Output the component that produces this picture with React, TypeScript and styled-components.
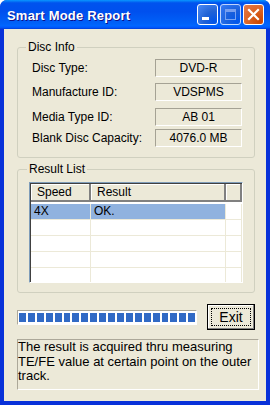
import styled, { createGlobalStyle } from "styled-components";

const GlobalStyle = createGlobalStyle`
  html, body {
    margin: 0;
    padding: 0;
    background: #ffffff;
  }
  body {
    font-family: "Liberation Sans", Arial, sans-serif;
  }
`;

const Window = styled.div`
  width: 270px;
  height: 405px;
  display: flex;
  flex-direction: column;
  background: #0831d9;
  border-radius: 7px 7px 0 0;
  overflow: hidden;
  box-sizing: border-box;
`;

const TitleBar = styled.div`
  height: 29px;
  flex: none;
  display: flex;
  align-items: center;
  padding: 0 6px 0 7px;
  background: linear-gradient(
    180deg,
    #0997ff 0%,
    #0053ee 10%,
    #0050ee 40%,
    #0061f8 80%,
    #0066ff 88%,
    #005bff 94%,
    #003dd7 100%
  );
`;

const Title = styled.div`
  flex: 1 1;
  color: #ffffff;
  font-weight: bold;
  font-size: 13px;
  letter-spacing: 0.2px;
  text-shadow: 1px 1px #0f1089;
  padding-top: 1px;
`;

const Controls = styled.div`
  display: flex;
  gap: 2px;
`;

const CtlButton = styled.div<{ $close?: boolean; $disabled?: boolean }>`
  width: 21px;
  height: 21px;
  box-sizing: border-box;
  border: 1px solid #ffffff;
  border-radius: 3px;
  display: flex;
  align-items: center;
  justify-content: center;
  background: ${(p) =>
    p.$close
      ? "radial-gradient(circle at 85% 85%, #cc4600 0%, #dc6527 55%, #e27b4f 100%)"
      : "radial-gradient(circle at 85% 85%, #0054e9 0%, #2263d5 45%, #4484f1 90%, #5a96ff 100%)"};
  opacity: ${(p) => (p.$disabled ? 0.75 : 1)};
  svg {
    display: block;
  }
`;

const Client = styled.div`
  flex: 1 1;
  margin: 0 4px 4px 4px;
  background: #ece9d8;
  padding: 11px 10px 10px 13px;
  display: flex;
  flex-direction: column;
  font-size: 12px;
  color: #000000;
`;

const Group = styled.fieldset<{ $pad: string; $mt?: number }>`
  margin: ${(p) => p.$mt ?? 0}px 1px 0 0;
  border: 1px solid #d0d0bf;
  border-radius: 3px;
  padding: ${(p) => p.$pad};
  min-width: 0;
`;

const Legend = styled.legend<{ $indent: number }>`
  margin-left: ${(p) => p.$indent}px;
  padding: 0 2px;
  font-size: 12px;
  line-height: 14px;
`;

const InfoRow = styled.div<{ $mt: number }>`
  display: flex;
  align-items: center;
  justify-content: space-between;
  margin-top: ${(p) => p.$mt}px;
`;

const Label = styled.span`
  line-height: 18px;
`;

const ValueBox = styled.div`
  width: 87px;
  height: 18px;
  box-sizing: border-box;
  border: 1px solid;
  border-color: #a5a294 #ffffff #ffffff #a5a294;
  text-align: center;
  line-height: 16px;
`;

const ListView = styled.div`
  height: 101px;
  box-sizing: border-box;
  border: 1px solid;
  border-color: #7f9db9 #ffffff #ffffff #7f9db9;
  box-shadow: inset 1px 1px 0 #404040;
  background: #ffffff;
  overflow: hidden;
  padding: 1px 0 0 1px;
`;

const HeaderRow = styled.div`
  display: flex;
  height: 18px;
`;

const HeaderCell = styled.div<{ $w?: number }>`
  ${(p) => (p.$w ? `width: ${p.$w}px; flex: none;` : "flex: 1 1;")}
  box-sizing: border-box;
  background: #ece9d8;
  border-right: 2px solid #808080;
  border-bottom: 2px solid #808080;
  box-shadow: inset 1px 1px 0 #ffffff;
  padding: 1px 0 0 6px;
  line-height: 14px;
`;

const Body = styled.div`
  padding-top: 2px;
`;

const Row = styled.div`
  display: flex;
  height: 16px;
  box-sizing: border-box;
  border-bottom: 1px solid #ece9d8;
`;

const Cell = styled.div<{ $w?: number; $sel?: boolean }>`
  ${(p) => (p.$w ? `width: ${p.$w}px; flex: none;` : "flex: 1 1;")}
  box-sizing: border-box;
  border-right: 1px solid #ece9d8;
  background: ${(p) => (p.$sel ? "#90b2df" : "transparent")};
  padding-left: 3px;
  line-height: 15px;
`;

const BottomRow = styled.div`
  display: flex;
  align-items: center;
  justify-content: space-between;
  margin-top: 11px;
  padding-right: 1px;
`;

const Progress = styled.div`
  width: 180px;
  height: 15px;
  box-sizing: border-box;
  border: 1px solid;
  border-color: #aca899 #ffffff #ffffff #aca899;
  background: #ffffff;
  padding: 2px 1px;
  display: flex;
  gap: 2px;
`;

const Block = styled.div`
  width: 7px;
  height: 9px;
  background: #316ac5;
`;

const ExitButton = styled.button.attrs({ type: "button" })`
  all: unset;
  width: 48px;
  height: 26px;
  box-sizing: border-box;
  border: 1px solid #000000;
  background: #ece9d8;
  box-shadow: inset -1px -1px 0 #808080, inset 1px 1px 0 #ffffff;
  display: flex;
  align-items: center;
  justify-content: center;
  padding: 3px;
  font-family: "Liberation Sans", Arial, sans-serif;
  font-size: 14px;
`;

const Focus = styled.span`
  flex: 1 1;
  align-self: stretch;
  border: 1px dotted #000000;
  display: flex;
  align-items: center;
  justify-content: center;
`;

const Note = styled.div`
  margin-top: 9px;
  margin-right: -3px;
  height: 51px;
  box-sizing: border-box;
  border: 1px solid;
  border-color: #aca899 #ffffff #ffffff #aca899;
  padding: 0;
  font-size: 13px;
  line-height: 14.5px;
`;

const info = [
  { label: "Disc Type:", value: "DVD-R", mt: 0 },
  { label: "Manufacture ID:", value: "VDSPMS", mt: 6 },
  { label: "Media Type ID:", value: "AB 01", mt: 7 },
  { label: "Blank Disc Capacity:", value: "4076.0 MB", mt: 3 }
];

const results = [{ speed: "4X", result: "OK." }, null, null, null, null];

export default function App() {
  return (
    <>
      <GlobalStyle />
      <Window>
        <TitleBar>
          <Title>Smart Mode Report</Title>
          <Controls>
            <CtlButton>
              <svg width="19" height="19" viewBox="0 0 19 19">
                <rect x="4" y="12" width="7" height="3" fill="#ffffff" />
              </svg>
            </CtlButton>
            <CtlButton $disabled>
              <svg width="19" height="19" viewBox="0 0 19 19">
                <rect
                  x="4.5"
                  y="4.5"
                  width="10"
                  height="10"
                  fill="none"
                  stroke="#9fb8ef"
                  strokeWidth="1"
                />
                <rect x="4" y="4" width="11" height="3" fill="#9fb8ef" />
              </svg>
            </CtlButton>
            <CtlButton $close>
              <svg width="19" height="19" viewBox="0 0 19 19">
                <path
                  d="M5 5 L14 14 M14 5 L5 14"
                  stroke="#ffffff"
                  strokeWidth="2.2"
                  strokeLinecap="square"
                />
              </svg>
            </CtlButton>
          </Controls>
        </TitleBar>
        <Client>
          <Group $pad="5px 12px 10px 14px">
            <Legend $indent={-6}>Disc Info</Legend>
            {info.map((row) => (
              <InfoRow key={row.label} $mt={row.mt}>
                <Label>{row.label}</Label>
                <ValueBox>{row.value}</ValueBox>
              </InfoRow>
            ))}
          </Group>
          <Group $pad="6px 11px 9px 11px" $mt={4}>
            <Legend $indent={-2}>Result List</Legend>
            <ListView>
              <HeaderRow>
                <HeaderCell $w={60}>Speed</HeaderCell>
                <HeaderCell $w={135}>Result</HeaderCell>
                <HeaderCell />
              </HeaderRow>
              <Body>
                {results.map((r, i) => (
                  <Row key={i}>
                    <Cell $w={60} $sel={!!r}>
                      {r?.speed}
                    </Cell>
                    <Cell $w={135} $sel={!!r}>
                      {r?.result}
                    </Cell>
                    <Cell />
                  </Row>
                ))}
              </Body>
            </ListView>
          </Group>
          <BottomRow>
            <Progress>
              {Array.from({ length: 20 }, (_, i) => (
                <Block key={i} />
              ))}
            </Progress>
            <ExitButton>
              <Focus>Exit</Focus>
            </ExitButton>
          </BottomRow>
          <Note>
            The result is acquired thru measuring TE/FE value at certain point
            on the outer track.
          </Note>
        </Client>
      </Window>
    </>
  );
}
